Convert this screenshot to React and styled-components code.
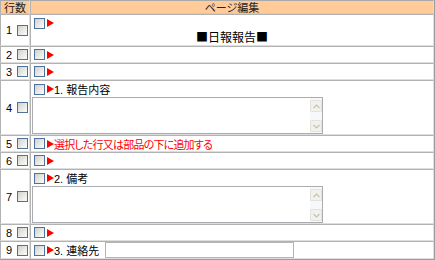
import React from 'react';
import styled, { createGlobalStyle } from 'styled-components';

const Global = createGlobalStyle`
  html, body { margin: 0; padding: 0; background: #fff; }
  body {
    font-family: "Liberation Sans", "Noto Sans CJK JP", sans-serif;
    font-size: 11px;
    color: #000;
  }
`;

const Sheet = styled.div`
  width: 435px;
  box-sizing: border-box;
  display: grid;
  grid-template-columns: 30px 1fr;
  border-right: 1px solid #9c9c9c;
  border-bottom: 1px solid #9c9c9c;
`;

const Cell = styled.div`
  box-sizing: border-box;
  min-width: 0;
  border-top: 1px solid #b2b2b2;
  border-left: 1px solid #b2b2b2;
  border-bottom: 1px solid #dedede;
  border-right: 1px solid #dedede;
`;

const HeadCell = styled(Cell)`
  height: 14px;
  background: #ffcc99;
  border-top-color: #a8a8a8;
  border-bottom-color: #c6cad6;
  display: flex;
  align-items: center;
  justify-content: center;
  font-family: "Noto Sans CJK JP", sans-serif;
  font-size: 11px;
  line-height: 12px;
  color: #222;
  font-feature-settings: "palt";
  white-space: nowrap;
`;

const NumCell = styled(Cell)`
  display: flex;
  align-items: center;
  justify-content: flex-end;
  gap: 5px;
  padding-right: 1px;
`;

const EditCell = styled(Cell)`
  display: flex;
  flex-direction: column;
`;

const Line = styled.div`
  height: ${(p) => p.$h || 15}px;
  display: flex;
  align-items: center;
  padding-left: 3px;
  white-space: nowrap;
  color: ${(p) => (p.$red ? '#ff0000' : '#000')};
  letter-spacing: ${(p) => (p.$red ? '-0.8px' : '0')};
  font-feature-settings: "palt";
`;

const Title = styled.div`
  height: 14px;
  line-height: 12px;
  text-align: center;
  font-family: "Noto Sans CJK JP", sans-serif;
  font-size: 12px;
  color: #000;
`;

const Check = styled.span`
  display: inline-block;
  width: 11px;
  height: 11px;
  box-sizing: border-box;
  border: 1px solid #4f719c;
  background: linear-gradient(135deg, #d0d0c8 0%, #e8e8e3 50%, #fbfbfa 100%);
  flex: none;
`;

const ArrowSvg = styled.svg`
  flex: none;
  margin-left: 2px;
  display: block;
`;

const Arrow = () => (
  <ArrowSvg width="7" height="8" viewBox="0 0 7 8">
    <polygon points="0,0 7,4 0,8" fill="#ff0000" />
  </ArrowSvg>
);

const AreaBox = styled.div`
  width: 291px;
  height: 37px;
  box-sizing: border-box;
  margin-left: 1px;
  border: 1px solid #a9adb2;
  display: flex;
  background: #fff;
`;

const Area = styled.textarea`
  flex: 1;
  border: 0;
  margin: 0;
  padding: 0;
  resize: none;
  outline: none;
  overflow: hidden;
  background: transparent;
  font: inherit;
`;

const ScrollBar = styled.div`
  width: 12px;
  box-sizing: border-box;
  display: flex;
  flex-direction: column;
  justify-content: space-between;
  padding: 2px 0 1px 0;
  background: #f6f8fc;
`;

const ScrollBtn = styled.div`
  height: 12px;
  box-sizing: border-box;
  background: #f2f1ea;
  border: 1px solid #e4e2da;
  border-radius: 1px;
  display: flex;
  align-items: center;
  justify-content: center;
`;

const Chevron = ({ up }) => (
  <svg width="7" height="5" viewBox="0 0 7 5">
    <polyline
      points={up ? '0.5,4 3.5,1 6.5,4' : '0.5,1 3.5,4 6.5,1'}
      fill="none"
      stroke="#c2c2bc"
      strokeWidth="1.2"
    />
  </svg>
);

const TextArea = () => (
  <AreaBox>
    <Area readOnly defaultValue="" />
    <ScrollBar>
      <ScrollBtn><Chevron up /></ScrollBtn>
      <ScrollBtn><Chevron /></ScrollBtn>
    </ScrollBar>
  </AreaBox>
);

const TextInput = styled.input`
  width: 189px;
  height: 16px;
  box-sizing: border-box;
  margin: 0 0 0 6px;
  padding: 0 2px;
  border: 1px solid #b4b4b4;
  outline: none;
  font: inherit;
  background: #fff;
`;

const Label = styled.span`
  font-feature-settings: "palt";
`;

const Head = ({ children }) => (
  <Line $h={16}>
    <Check />
    <Arrow />
    {children}
  </Line>
);

const rows = [
  { n: 1, kind: 'title' },
  { n: 2 },
  { n: 3 },
  { n: 4, kind: 'area', label: '1. 報告内容' },
  { n: 5, kind: 'red', label: '選択した行又は部品の下に追加する' },
  { n: 6 },
  { n: 7, kind: 'area', label: '2. 備考' },
  { n: 8 },
  { n: 9, kind: 'input', label: '3. 連絡先' },
];

function Editor({ row }) {
  if (row.kind === 'title') {
    return (
      <EditCell>
        <Head />
        <Title>■日報報告■</Title>
      </EditCell>
    );
  }
  if (row.kind === 'area') {
    return (
      <EditCell>
        <Head><Label>{row.label}</Label></Head>
        <TextArea />
      </EditCell>
    );
  }
  if (row.kind === 'input') {
    return (
      <EditCell>
        <Line $h={16}>
          <Check />
          <Arrow />
          <Label>{row.label}</Label>
          <TextInput type="text" />
        </Line>
      </EditCell>
    );
  }
  return (
    <EditCell>
      <Line $red={row.kind === 'red'}>
        <Check />
        <Arrow />
        {row.label && <Label>{row.label}</Label>}
      </Line>
    </EditCell>
  );
}

export default function App() {
  return (
    <>
      <Global />
      <Sheet>
        <HeadCell>行数</HeadCell>
        <HeadCell>ページ編集</HeadCell>
        {rows.map((r) => (
          <React.Fragment key={r.n}>
            <NumCell>
              <span>{r.n}</span>
              <Check />
            </NumCell>
            <Editor row={r} />
          </React.Fragment>
        ))}
      </Sheet>
    </>
  );
}
